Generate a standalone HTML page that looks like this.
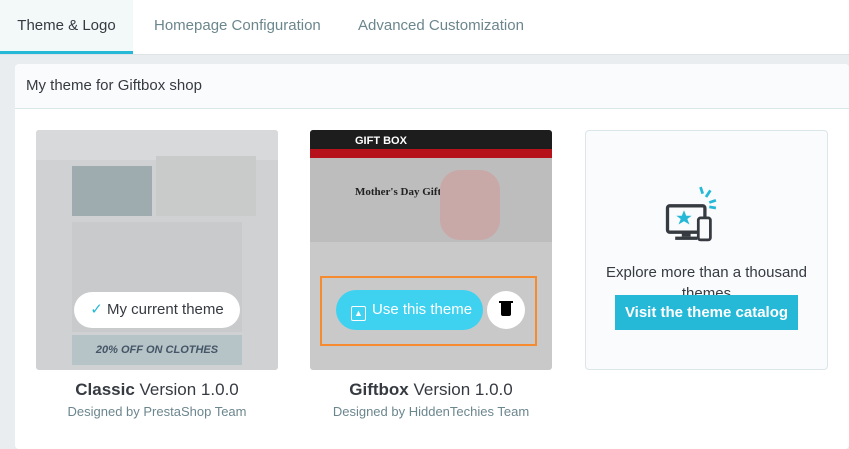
<!DOCTYPE html><html><head><style>
body{margin:0;width:849px;height:449px;overflow:hidden;background:#eaedef;font-family:"Liberation Sans",sans-serif;position:relative}
.a{position:absolute}
.tab{position:absolute;top:0;height:54px;line-height:52px;font-size:15px;color:#6c868e}
</style></head><body>
<div class="a" style="left:0;top:0;width:849px;height:54px;background:#fff;border-bottom:1px solid #dfe3e5"></div>
<div class="tab" style="left:0;width:133px;background:#f3f8f9;color:#363a41;text-align:center;border-bottom:3px solid #25b9d7;height:51px">Theme &amp; Logo</div>
<div class="tab" style="left:154px">Homepage Configuration</div>
<div class="tab" style="left:358px">Advanced Customization</div>
<div class="a" style="left:15px;top:64px;width:834px;height:385px;background:#fff;border-radius:4px"></div>
<div class="a" style="left:15px;top:64px;width:834px;height:44px;background:#fafbfc;border-bottom:1px solid #dbe6e9;border-radius:4px 4px 0 0"></div>
<div class="a" style="left:26px;top:77px;font-size:15px;color:#363a41">My theme for Giftbox shop</div>

<div class="a" style="left:36px;top:130px;width:242px;height:240px;background:#cfd1d2;border-radius:3px;overflow:hidden">
 <div class="a" style="left:0;top:0;width:242px;height:30px;background:#d7d9da"></div>
 <div class="a" style="left:36px;top:36px;width:80px;height:50px;background:#9eacb0"></div>
 <div class="a" style="left:120px;top:26px;width:100px;height:60px;background:#c9caca"></div>
 <div class="a" style="left:36px;top:92px;width:170px;height:110px;background:#c8cacb"></div>
 <div class="a" style="left:36px;top:205px;width:170px;height:30px;background:#b6c3c7;font-size:11px;font-weight:bold;color:#456;text-align:center;line-height:30px;font-style:italic">20% OFF ON CLOTHES</div>
 <div class="a" style="left:38px;top:162px;width:166px;height:36px;border-radius:18px;background:#fff;font-size:15px;color:#363a41;line-height:36px;text-align:center"><span style="color:#25b9d7">✓</span> My current theme</div>
</div>
<div class="a" style="left:36px;top:380px;width:242px;text-align:center;font-size:17px;color:#363a41"><b>Classic</b> Version 1.0.0</div>
<div class="a" style="left:36px;top:404px;width:242px;text-align:center;font-size:13px;color:#6c868e">Designed by PrestaShop Team</div>

<div class="a" style="left:310px;top:130px;width:242px;height:240px;background:#c9c9c9;border-radius:3px;overflow:hidden">
 <div class="a" style="left:0;top:0;width:242px;height:19px;background:#1d1d1d"></div>
 <div class="a" style="left:0;top:19px;width:242px;height:9px;background:#b5121b"></div>
 <div class="a" style="left:0;top:28px;width:242px;height:84px;background:#bdbdbd"></div>
 <div class="a" style="left:45px;top:5px;font-size:11px;font-weight:bold;color:#fff">GIFT BOX</div>
 <div class="a" style="left:45px;top:56px;font-size:11px;font-weight:bold;color:#222;font-family:'Liberation Serif',serif">Mother's Day Gifts</div>
 <div class="a" style="left:130px;top:40px;width:60px;height:70px;background:#c9a8a8;border-radius:20px"></div>
</div>
<div class="a" style="left:320px;top:276px;width:213px;height:66px;border:2px solid #f58a2e"></div>
<div class="a" style="left:336px;top:290px;width:147px;height:40px;border-radius:20px;background:#3ed2f0;color:#fff;font-size:15px;line-height:40px"><span style="display:inline-block;width:13px;height:13px;border:1.5px solid #fff;border-radius:2px;margin:0 6px 0 15px;vertical-align:-2px;font-size:9px;line-height:13px;text-align:center">▲</span>Use this theme</div>
<div class="a" style="left:487px;top:291px;width:38px;height:38px;border-radius:50%;background:#fff"><div class="a" style="left:14px;top:12px;width:10px;height:13px;background:#000;border-radius:0 0 2px 2px"></div><div class="a" style="left:12px;top:10px;width:14px;height:2px;background:#000"></div></div>
<div class="a" style="left:310px;top:380px;width:242px;text-align:center;font-size:17px;color:#363a41"><b>Giftbox</b> Version 1.0.0</div>
<div class="a" style="left:310px;top:404px;width:242px;text-align:center;font-size:13px;color:#6c868e">Designed by HiddenTechies Team</div>

<div class="a" style="left:585px;top:130px;width:241px;height:238px;background:#fafbfc;border:1px solid #dbe6e9;border-radius:4px;overflow:hidden">
 <svg class="a" style="left:76px;top:55px" width="66" height="66" viewBox="0 0 60 60"><rect x="5" y="18" width="34" height="24" rx="2" fill="none" stroke="#363a41" stroke-width="3"/><rect x="18" y="42" width="8" height="4" fill="#363a41"/><rect x="12" y="46" width="20" height="3" fill="#363a41"/><polygon points="20,22 22,27 27,27 23,30 25,35 20,32 15,35 17,30 13,27 18,27" fill="#25b9d7"/><rect x="33" y="29" width="11" height="20" rx="2" fill="#fafbfc" stroke="#363a41" stroke-width="2.5"/><path d="M35 1 L37 7 M44 4 L40 10 M49 13 L43 15 M49 20 L43 19" stroke="#25b9d7" stroke-width="2.5"/></svg>
 <div class="a" style="left:0;top:131px;width:241px;text-align:center;font-size:15px;color:#363a41;line-height:21px">Explore more than a thousand themes</div>
 <div class="a" style="left:29px;top:164px;width:183px;height:35px;background:#25b9d7;color:#fff;font-size:15px;font-weight:bold;text-align:center;line-height:35px">Visit the theme catalog</div>
</div>
</body></html>
